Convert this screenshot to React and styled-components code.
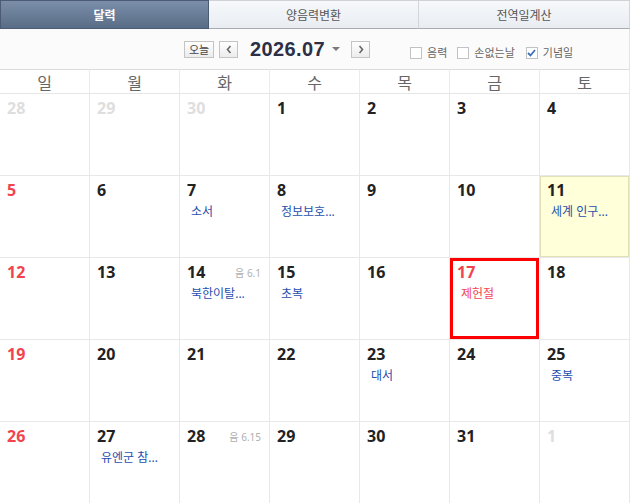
import React from "react";
import styled, { createGlobalStyle, css } from "styled-components";

const GlobalStyle = createGlobalStyle`
	body {
		margin: 0;
		background: #fff;
		font-family: "Noto Sans", "Noto Sans CJK KR", sans-serif;
	}
`;

const Wrapper = styled.div`
	width: 630px;
	overflow: hidden;
`;

const TabBar = styled.div`
	display: flex;
	height: 29px;
`;
const Tab = styled.div`
	flex: ${(props) => props.w}px 0 0;
	display: flex;
	align-items: center;
	justify-content: center;
	box-sizing: border-box;
	font-size: 12px;
	${(props) =>
		props.active
			? css`
					background: linear-gradient(#7a8ea9, #5a6d87);
					border: 1px solid #4a5b73;
					color: #fff;
					font-weight: 700;
			  `
			: css`
					background: linear-gradient(#f6f8fa, #e9edf2);
					border-top: 1px solid #cfd2d6;
					border-bottom: 1px solid #a8acb2;
					border-right: 1px solid #d2d6db;
					color: #555;
			  `}
`;

const Toolbar = styled.div`
	height: 40px;
	display: flex;
	align-items: center;
	padding-left: 184px;
	background: #fbfbfb;
	border-right: 1px solid #e3e3e3;
`;
const SmallButton = styled.div`
	height: 17px;
	width: ${(props) => props.w}px;
	box-sizing: border-box;
	display: flex;
	align-items: center;
	justify-content: center;
	border: 1px solid #c4c4c4;
	background: linear-gradient(#fff, #ececec);
	font-size: 11px;
	color: #444;
	margin-right: ${(props) => props.mr || 0}px;
`;
const Title = styled.div`
	font-family: "Liberation Sans", "Noto Sans CJK KR", sans-serif;
	font-size: 20px;
	font-weight: 700;
	letter-spacing: 0.4px;
	color: #2c2f46;
	margin-left: 7px;
	line-height: 24px;
`;
const Caret = styled.span`
	width: 0;
	height: 0;
	border-left: 4px solid transparent;
	border-right: 4px solid transparent;
	border-top: 4px solid #7a7a7a;
	margin: 0 11px 0 7px;
`;
const Options = styled.div`
	display: flex;
	align-items: center;
	margin: 7px 0 0 40px;
`;
const Check = styled.div`
	width: 12px;
	height: 12px;
	box-sizing: border-box;
	border: 1px solid #c2c2c2;
	background: #fff;
	display: grid;
	place-items: center;
	margin-right: 5px;
`;
const CheckLabel = styled.span`
	font-size: 11px;
	color: #666;
	margin-right: ${(props) => props.mr || 0}px;
	line-height: 14px;
`;

const Grid = styled.div`
	display: grid;
	grid-template-columns: repeat(7, 1fr);
`;
const HeadCell = styled.div`
	height: 23px;
	border-top: 1px solid #dcdcdc;
	border-bottom: 1px solid #e6e6e6;
	border-right: 1px solid #ebebeb;
	display: flex;
	align-items: center;
	justify-content: center;
	font-size: 16px;
	color: #666;
`;
const DayCell = styled.div`
	height: 81px;
	box-sizing: border-box;
	border-bottom: 1px solid #e8e8e8;
	border-right: 1px solid #e8e8e8;
	padding: 4px 8px 0 7px;
	height: 82px;
	${(props) =>
		props.today &&
		css`
			background: #ffffd9;
			box-shadow: inset 0 0 0 1px #e2e0b6;
		`}
	${(props) =>
		props.selected &&
		css`
			box-shadow: inset 0 0 0 3px #ff0000;
			border-right-color: transparent;
		`}
`;
const DayTop = styled.div`
	display: flex;
	justify-content: space-between;
	align-items: center;
`;
const DayNum = styled.span`
	font-size: 16px;
	font-weight: 700;
	line-height: 20px;
	color: ${(props) =>
		props.other ? "#dedede" : props.red ? "#f2444f" : "#222"};
`;
const Lunar = styled.span`
	font-size: 10px;
	color: #b0b0b0;
	margin-top: 1px;
`;
const Event = styled.div`
	font-size: 12px;
	line-height: 16px;
	margin: 4px 0 0 4px;
	white-space: nowrap;
	color: ${(props) => (props.red ? "#f2444f" : "#1f4faf")};
`;

const weeks = [
	[{ d: 28, o: 1 }, { d: 29, o: 1 }, { d: 30, o: 1 }, { d: 1 }, { d: 2 }, { d: 3 }, { d: 4 }],
	[
		{ d: 5 },
		{ d: 6 },
		{ d: 7, e: "소서" },
		{ d: 8, e: "정보보호..." },
		{ d: 9 },
		{ d: 10 },
		{ d: 11, e: "세계 인구...", today: 1 },
	],
	[
		{ d: 12 },
		{ d: 13 },
		{ d: 14, l: "음 6.1", e: "북한이탈..." },
		{ d: 15, e: "초복" },
		{ d: 16 },
		{ d: 17, e: "제헌절", h: 1, sel: 1 },
		{ d: 18 },
	],
	[{ d: 19 }, { d: 20 }, { d: 21 }, { d: 22 }, { d: 23, e: "대서" }, { d: 24 }, { d: 25, e: "중복" }],
	[
		{ d: 26 },
		{ d: 27, e: "유엔군 참..." },
		{ d: 28, l: "음 6.15" },
		{ d: 29 },
		{ d: 30 },
		{ d: 31 },
		{ d: 1, o: 1 },
	],
];

const Chevron = ({ dir }) => (
	<svg width='6' height='9' viewBox='0 0 6 9'>
		<polyline
			points={dir === "left" ? "4.5,1 1.5,4.5 4.5,8" : "1.5,1 4.5,4.5 1.5,8"}
			fill='none'
			stroke='#666'
			strokeWidth='1.6'
		/>
	</svg>
);

const App = () => {
	return (
		<Wrapper>
			<GlobalStyle />
			<TabBar>
				<Tab active w={209}>
					달력
				</Tab>
				<Tab w={210}>양음력변환</Tab>
				<Tab w={211}>전역일계산</Tab>
			</TabBar>
			<Toolbar>
				<SmallButton w={30} mr={5}>
					오늘
				</SmallButton>
				<SmallButton w={19} mr={5}>
					<Chevron dir='left' />
				</SmallButton>
				<Title>2026.07</Title>
				<Caret />
				<SmallButton w={19}>
					<Chevron dir='right' />
				</SmallButton>
				<Options>
					<Check />
					<CheckLabel mr={10}>음력</CheckLabel>
					<Check />
					<CheckLabel mr={11}>손없는날</CheckLabel>
					<Check>
						<svg width='9' height='8' viewBox='0 0 9 8'>
							<polyline
								points='1,4 3.5,6.5 8,1'
								fill='none'
								stroke='#3a6fb8'
								strokeWidth='1.8'
							/>
						</svg>
					</Check>
					<CheckLabel>기념일</CheckLabel>
				</Options>
			</Toolbar>
			<Grid>
				{["일", "월", "화", "수", "목", "금", "토"].map((w) => (
					<HeadCell key={w}>{w}</HeadCell>
				))}
				{weeks.map((week, wi) =>
					week.map((c, ci) => (
						<DayCell key={wi + "-" + ci} today={c.today} selected={c.sel}>
							<DayTop>
								<DayNum other={c.o} red={!c.o && (ci === 0 || c.h)}>
									{c.d}
								</DayNum>
								{c.l && <Lunar>{c.l}</Lunar>}
							</DayTop>
							{c.e && <Event red={c.h}>{c.e}</Event>}
						</DayCell>
					))
				)}
			</Grid>
		</Wrapper>
	);
};

export default App;
